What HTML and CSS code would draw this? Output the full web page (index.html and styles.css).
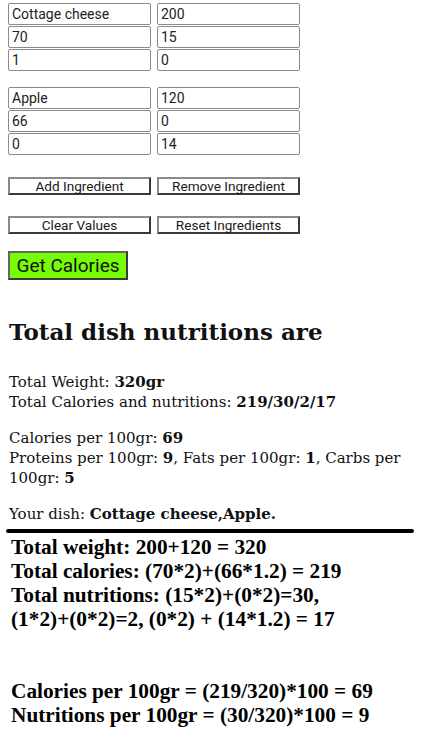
FILE: index.html
```html
<!DOCTYPE html>
<html>
<head>
<meta charset="utf-8">
<link rel="stylesheet" href="styles.css">
</head>
<body>
<div class="page">
  <div class="ingredients">
    <div class="ingredient">
      <input class="field" type="text" value="Cottage cheese">
      <input class="field" type="text" value="200">
      <input class="field" type="text" value="70">
      <input class="field" type="text" value="15">
      <input class="field" type="text" value="1">
      <input class="field" type="text" value="0">
    </div>
    <div class="ingredient">
      <input class="field" type="text" value="Apple">
      <input class="field" type="text" value="120">
      <input class="field" type="text" value="66">
      <input class="field" type="text" value="0">
      <input class="field" type="text" value="0">
      <input class="field" type="text" value="14">
    </div>
  </div>
  <div class="btn-row">
    <button class="btn">Add Ingredient</button>
    <button class="btn">Remove Ingredient</button>
  </div>
  <div class="btn-row">
    <button class="btn">Clear Values</button>
    <button class="btn">Reset Ingredients</button>
  </div>
  <button class="btn-go">Get Calories</button>

  <h2 class="title">Total dish nutritions are</h2>
  <p class="para first">Total Weight: <b>320gr</b><br>Total Calories and nutritions: <b>219/30/2/17</b></p>
  <p class="para">Calories per 100gr: <b>69</b><br>Proteins per 100gr: <b>9</b>, Fats per 100gr: <b>1</b>, Carbs per 100gr: <b>5</b></p>
  <p class="para">Your dish: <b>Cottage cheese,Apple.</b></p>
  <div class="rule"></div>
  <div class="explain">
    <p class="ex-block">Total weight: 200+120 = 320<br>Total calories: (70*2)+(66*1.2) = 219<br>Total nutritions: (15*2)+(0*2)=30,<br>(1*2)+(0*2)=2, (0*2) + (14*1.2) = 17</p>
    <p class="ex-block ex-gap">Calories per 100gr = (219/320)*100 = 69<br>Nutritions per 100gr = (30/320)*100 = 9</p>
  </div>
</div>
</body>
</html>
```

FILE: styles.css
```css
html, body {
  margin: 0;
  padding: 0;
  background: #ffffff;
}
.page {
  padding: 3px 8px 0 8px;
  font-family: "DejaVu Serif", serif;
  color: #111;
}
.ingredients {
  display: flex;
  flex-direction: column;
  gap: 16px;
  width: 292px;
}
.ingredient {
  display: grid;
  grid-template-columns: 143px 143px;
  column-gap: 6px;
  row-gap: 1px;
}
.field {
  box-sizing: border-box;
  width: 143px;
  height: 22px;
  margin: 0;
  padding: 0 3px;
  border: 1px solid #8a8a8a;
  border-radius: 2px;
  font-family: Roboto, sans-serif;
  font-size: 14px;
  color: #222;
  background: #fff;
}
.btn-row {
  display: flex;
  gap: 6px;
  margin-top: 22px;
}
.btn-row + .btn-row {
  margin-top: 21px;
}
.btn {
  box-sizing: border-box;
  width: 143px;
  height: 18px;
  margin: 0;
  padding: 0;
  background: #fff;
  border: 2px solid;
  border-color: #8a8a8a #3a3a3a #3a3a3a #8a8a8a;
  font-family: Roboto, sans-serif;
  font-size: 13.6px;
  line-height: 14px;
  color: #1a1a1a;
}
.btn-go {
  display: block;
  box-sizing: border-box;
  width: 120px;
  height: 29px;
  margin: 17px 0 0 0;
  padding: 0;
  background: #76fc06;
  border: 2px solid;
  border-color: #666 #3a3a3a #3a3a3a #666;
  font-family: Roboto, sans-serif;
  font-size: 19px;
  color: #111;
}
.title {
  font-family: "DejaVu Serif", serif;
  font-size: 23px;
  font-weight: bold;
  margin: 37px 0 0 1px;
  line-height: 30px;
}
.para {
  font-size: 15px;
  line-height: 20px;
  margin: 16px 0 0 1px;
}
.para.first {
  margin-top: 25px;
}
.para b {
  font-weight: bold;
}
.rule {
  height: 4px;
  margin: 5px 4px 0 -2px;
  background: #000;
  border-radius: 2px;
}
.explain {
  font-family: "Liberation Serif", serif;
  font-weight: bold;
  font-size: 21.3px;
  line-height: 24px;
  color: #000;
  padding-left: 3px;
}
.ex-block {
  margin: 2px 0 0 0;
}
.ex-gap {
  margin-top: 48px;
}
```
